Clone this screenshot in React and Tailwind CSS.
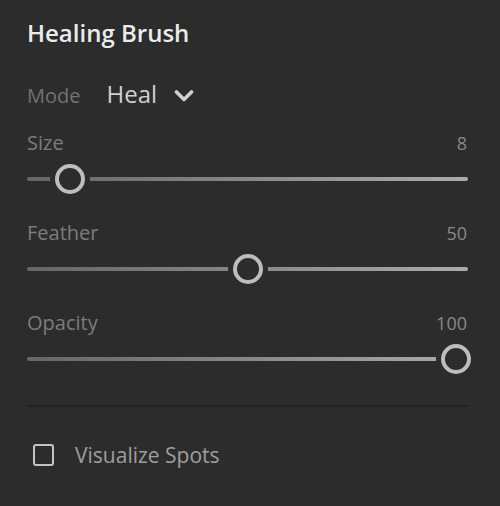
const sliders = [
  { label: 'Size', value: '8', thumb: 70 },
  { label: 'Feather', value: '50', thumb: 248 },
  { label: 'Opacity', value: '100', thumb: 456 },
];

function Slider({ label, value, thumb }) {
  return (
    <div>
      <div className="flex items-end justify-between leading-[24px]">
        <span className="text-[20px] text-[#7c7c7c]">{label}</span>
        <span className="text-[18px] text-[#888888] pr-[1px]">{value}</span>
      </div>
      <div className="relative h-[30px] mt-[9px]">
        <div className="absolute left-0 right-0 top-[13px] h-[4px] rounded-full bg-gradient-to-r from-[#666666] to-[#ababab]" />
        {/* thumb, left is relative to the panel content box (starts at x=27) */}
        <div
          className="absolute top-0 h-[30px] w-[30px] rounded-full border-[4px] border-[#bdbdbd] bg-[#2c2c2c] shadow-[0_0_0_5px_#2c2c2c]"
          style={{ left: thumb - 27 - 15 }}
        />
      </div>
    </div>
  );
}

export default function App() {
  return (
    <div
      className="w-[500px] h-[506px] bg-[#2c2c2c] pl-[27px] pr-[32px] pt-[16px]"
      style={{ fontFamily: '"Open Sans", "Liberation Sans", sans-serif' }}
    >
      <h1 className="text-[24px] font-semibold text-[#ebebeb] leading-[34px]">Healing Brush</h1>

      <div className="mt-[29px] flex items-baseline leading-[30px]">
        <span className="text-[20px] text-[#727272]">Mode</span>
        <span className="ml-[26px] text-[24px] text-[#d0d0d0]">Heal</span>
        <svg width="20" height="14" viewBox="0 0 20 14" className="ml-[17px] self-center mt-[1px]">
          <path d="M2.5 3 L10 10.5 L17.5 3" fill="none" stroke="#d0d0d0" strokeWidth="3.6" strokeLinecap="round" strokeLinejoin="round" />
        </svg>
      </div>

      <div className="mt-[20px] flex flex-col gap-[27px]">
        {sliders.map((s) => (
          <Slider key={s.label} {...s} />
        ))}
      </div>

      <div className="mt-[31px] h-[2px] bg-[#232323]" />

      <label className="mt-[34px] flex items-center leading-[28px]">
        <span className="ml-[6px] h-[22px] w-[21px] rounded-[3px] border-2 border-[#c4c4c4]" />
        <span className="ml-[21px] text-[21px] text-[#9e9e9e]">Visualize Spots</span>
      </label>
    </div>
  );
}
